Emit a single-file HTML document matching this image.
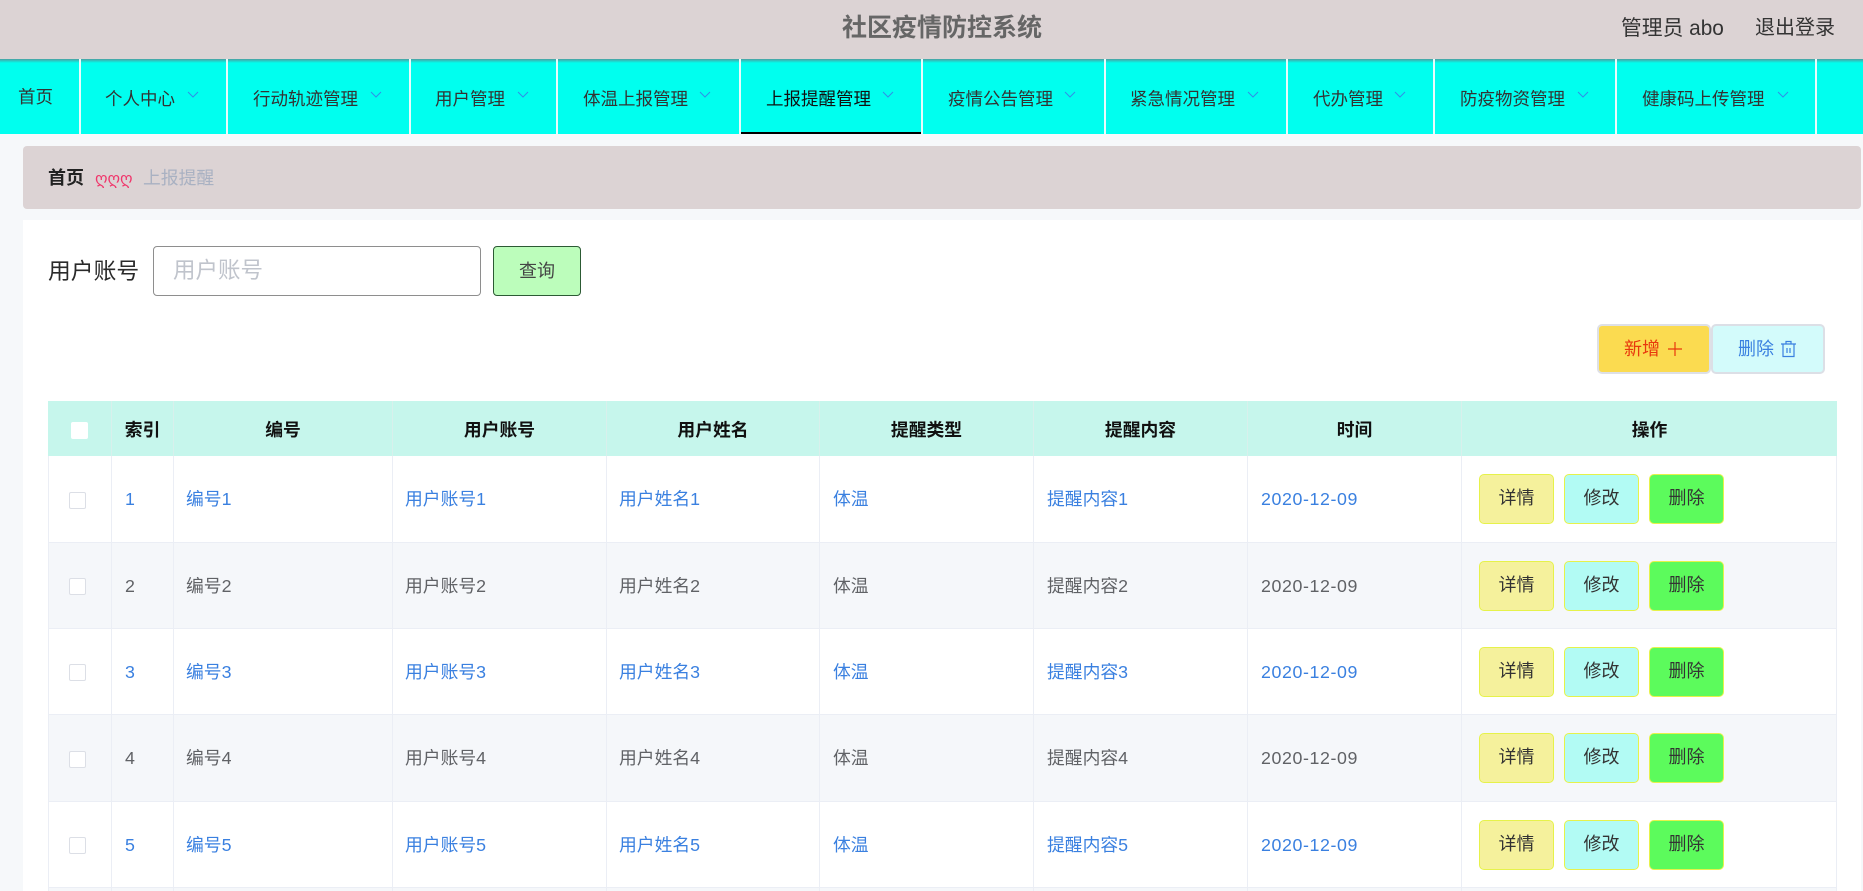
<!DOCTYPE html>
<html lang="zh"><head><meta charset="utf-8"><title>社区疫情防控系统</title>
<style>
*{box-sizing:border-box;margin:0;padding:0}
html,body{width:1863px;height:891px;overflow:hidden;background:#f6f8fa;font-family:"Liberation Sans","Noto Sans CJK SC",sans-serif;color:#333}
.a{position:absolute;white-space:nowrap}
#hd{left:0;top:0;width:1863px;height:59px;background:#dcd3d4;z-index:2}
#shadow{left:0;top:59px;width:1863px;height:4px;background:linear-gradient(#4d9ea0,#00ffef);z-index:3}
#nav{left:0;top:59px;width:1863px;height:75px;background:#00ffef}
.sep{position:absolute;top:59px;width:2px;height:75px;background:#e8fbfb;z-index:4}
.nt{position:absolute;top:86px;font-size:17.5px;line-height:26px;color:#333;white-space:nowrap}
.cv{position:absolute;top:91px}
#bc{left:23px;top:146px;width:1838px;height:63px;background:#dcd3d4;border-radius:4px}
#main{left:23px;top:220px;width:1838px;height:671px;background:#fff}
.r{position:absolute;left:48px;width:1789px;border-bottom:1px solid #ebeef5;font-size:17.8px}
.c{position:absolute;top:0;height:100%;border-right:1px solid #ebeef5;padding-left:13px;white-space:nowrap;overflow:hidden}
.c1{left:0;width:64px;border-left:1px solid #ebeef5}.c2{left:64px;width:62px}.c3{left:126px;width:219px;padding-left:12px}.c4{left:345px;width:214px;padding-left:12px}.c5{left:559px;width:213px;padding-left:12px}.c6{left:772px;width:214px}.c7{left:986px;width:214px}.c8{left:1200px;width:214px;letter-spacing:.6px}.c9{left:1414px;width:375px}
.h{background:#c6f6ec;top:401px;height:55px;border:0;line-height:59px;font-weight:bold;color:#111;letter-spacing:0}
.h .c{padding:0;text-align:center;border-color:#d8f0ec;border-left:0;letter-spacing:0}
.o{color:#3a80e0;background:#fff}
.e{color:#606266;background:#f5f7fa}
.ck{position:absolute;left:20px;width:17px;height:17px;background:#fff;border:1px solid #dcdfe6;border-radius:2px}
.b{position:absolute;width:75px;height:50px;border-radius:5px;text-align:center;line-height:46px;font-size:18px;color:#333;border:1px solid #e6f24a;letter-spacing:0}
.b1{left:17px;background:#f5f19c}.b2{left:102px;background:#b2fbf4}.b3{left:187px;background:#5cfb5c}
</style></head><body>
<div class="a" id="hd"></div><div class="a" id="shadow"></div>
<div class="a" style="left:842px;top:12px;font-size:25px;line-height:32px;font-weight:bold;color:#666;z-index:5">社区疫情防控系统</div>
<div class="a" style="left:1621px;top:15px;font-size:20.8px;line-height:27px;color:#333;z-index:5">管理员 abo</div>
<div class="a" style="left:1755px;top:15px;font-size:20px;line-height:27px;color:#333;z-index:5">退出登录</div>
<div class="a" id="nav"></div>
<div class="sep" style="left:79px"></div><div class="sep" style="left:226px"></div><div class="sep" style="left:409px"></div><div class="sep" style="left:556px"></div><div class="sep" style="left:739px"></div><div class="sep" style="left:921px"></div><div class="sep" style="left:1104px"></div><div class="sep" style="left:1286px"></div><div class="sep" style="left:1433px"></div><div class="sep" style="left:1615px"></div><div class="sep" style="left:1815px"></div>
<div class="a" style="left:741px;top:132px;width:180px;height:2px;background:#000;z-index:5"></div>
<div class="nt" style="left:18px;top:84px">首页</div>
<div class="nt" style="left:105px">个人中心</div>
<div class="nt" style="left:253px">行动轨迹管理</div>
<div class="nt" style="left:435px">用户管理</div>
<div class="nt" style="left:583px">体温上报管理</div>
<div class="nt" style="left:766px;color:#111">上报提醒管理</div>
<div class="nt" style="left:948px">疫情公告管理</div>
<div class="nt" style="left:1130px">紧急情况管理</div>
<div class="nt" style="left:1313px">代办管理</div>
<div class="nt" style="left:1460px">防疫物资管理</div>
<div class="nt" style="left:1642px">健康码上传管理</div>
<svg class="cv" style="left:187px" width="12" height="8"><path d="M1 1L6 6L11 1" fill="none" stroke="#2f8fe8" stroke-width="1"/></svg>
<svg class="cv" style="left:370px" width="12" height="8"><path d="M1 1L6 6L11 1" fill="none" stroke="#2f8fe8" stroke-width="1"/></svg>
<svg class="cv" style="left:517px" width="12" height="8"><path d="M1 1L6 6L11 1" fill="none" stroke="#2f8fe8" stroke-width="1"/></svg>
<svg class="cv" style="left:699px" width="12" height="8"><path d="M1 1L6 6L11 1" fill="none" stroke="#2f8fe8" stroke-width="1"/></svg>
<svg class="cv" style="left:882px" width="12" height="8"><path d="M1 1L6 6L11 1" fill="none" stroke="#2f8fe8" stroke-width="1"/></svg>
<svg class="cv" style="left:1064px" width="12" height="8"><path d="M1 1L6 6L11 1" fill="none" stroke="#2f8fe8" stroke-width="1"/></svg>
<svg class="cv" style="left:1247px" width="12" height="8"><path d="M1 1L6 6L11 1" fill="none" stroke="#2f8fe8" stroke-width="1"/></svg>
<svg class="cv" style="left:1394px" width="12" height="8"><path d="M1 1L6 6L11 1" fill="none" stroke="#2f8fe8" stroke-width="1"/></svg>
<svg class="cv" style="left:1577px" width="12" height="8"><path d="M1 1L6 6L11 1" fill="none" stroke="#2f8fe8" stroke-width="1"/></svg>
<svg class="cv" style="left:1777px" width="12" height="8"><path d="M1 1L6 6L11 1" fill="none" stroke="#2f8fe8" stroke-width="1"/></svg>

<div class="a" id="bc"></div>
<div class="a" style="left:48px;top:165px;font-size:18px;line-height:26px;font-weight:bold;color:#222">首页</div>
<div class="a" style="left:95px;top:167px;width:38px;font-size:16px;line-height:24px;color:#f0366b;font-family:'DejaVu Sans',sans-serif;letter-spacing:-.1px">ღღღ</div>
<div class="a" style="left:143px;top:165px;font-size:17.8px;line-height:26px;color:#a9b1c2">上报提醒</div>

<div class="a" id="main"></div>
<div class="a" style="left:48px;top:255px;font-size:22.8px;line-height:32px;color:#2a2a2a">用户账号</div>
<div class="a" style="left:153px;top:246px;width:328px;height:50px;background:#fff;border:1px solid #8e8e8e;border-radius:4px"></div>
<div class="a" style="left:173px;top:255px;font-size:22.5px;line-height:32px;color:#c0c4cc">用户账号</div>
<div class="a" style="left:493px;top:246px;width:88px;height:50px;background:#bcfdbb;border:1px solid #2c5a34;border-radius:4px;text-align:center;line-height:49px;font-size:18px;color:#444">查询</div>

<div class="a" style="left:1597px;top:324px;width:114px;height:50px;background:#fbdb50;border:2px solid #dee0e6;border-radius:5px;font-size:18px;line-height:46px;color:#e8380d;padding-left:25px">新增</div>
<svg class="a" style="left:1667px;top:341px" width="16" height="16"><path d="M8 1V15M1 8H15" stroke="#e8380d" stroke-width="1.2"/></svg>
<div class="a" style="left:1711px;top:324px;width:114px;height:50px;background:#d3fbfb;border:2px solid #dcdfe6;border-radius:5px;font-size:18px;line-height:46px;color:#3a80e0;padding-left:25px">删除</div>
<svg class="a" style="left:1780px;top:340px" width="17" height="18"><path d="M1 4H16M6 4V1.5H11V4M3 4V16.5H14V4M7 8V13M10 8V13" fill="none" stroke="#3a80e0" stroke-width="1.2"/></svg>

<div class="r h"><div class="c c1" style="border:0;border-right:1px solid #d8f0ec"></div><div class="c c2">索引</div><div class="c c3">编号</div><div class="c c4">用户账号</div><div class="c c5">用户姓名</div><div class="c c6">提醒类型</div><div class="c c7">提醒内容</div><div class="c c8">时间</div><div class="c c9" style="border:0">操作</div></div>
<div class="a" style="left:71px;top:422px;width:17px;height:17px;background:#fff;border-radius:2px;z-index:3"></div>

<div class="r o" style="top:456px;height:87px;line-height:86px"><div class="c c1"><span class="ck" style="top:36px"></span></div><div class="c c2">1</div><div class="c c3">编号1</div><div class="c c4">用户账号1</div><div class="c c5">用户姓名1</div><div class="c c6">体温</div><div class="c c7">提醒内容1</div><div class="c c8">2020-12-09</div><div class="c c9"><span class="b b1" style="top:18px">详情</span><span class="b b2" style="top:18px">修改</span><span class="b b3" style="top:18px">删除</span></div></div>

<div class="r e" style="top:543px;height:86px;line-height:86px"><div class="c c1"><span class="ck" style="top:35px"></span></div><div class="c c2">2</div><div class="c c3">编号2</div><div class="c c4">用户账号2</div><div class="c c5">用户姓名2</div><div class="c c6">体温</div><div class="c c7">提醒内容2</div><div class="c c8">2020-12-09</div><div class="c c9"><span class="b b1" style="top:18px">详情</span><span class="b b2" style="top:18px">修改</span><span class="b b3" style="top:18px">删除</span></div></div>

<div class="r o" style="top:629px;height:86px;line-height:86px"><div class="c c1"><span class="ck" style="top:35px"></span></div><div class="c c2">3</div><div class="c c3">编号3</div><div class="c c4">用户账号3</div><div class="c c5">用户姓名3</div><div class="c c6">体温</div><div class="c c7">提醒内容3</div><div class="c c8">2020-12-09</div><div class="c c9"><span class="b b1" style="top:18px">详情</span><span class="b b2" style="top:18px">修改</span><span class="b b3" style="top:18px">删除</span></div></div>

<div class="r e" style="top:715px;height:87px;line-height:86px"><div class="c c1"><span class="ck" style="top:36px"></span></div><div class="c c2">4</div><div class="c c3">编号4</div><div class="c c4">用户账号4</div><div class="c c5">用户姓名4</div><div class="c c6">体温</div><div class="c c7">提醒内容4</div><div class="c c8">2020-12-09</div><div class="c c9"><span class="b b1" style="top:18px">详情</span><span class="b b2" style="top:18px">修改</span><span class="b b3" style="top:18px">删除</span></div></div>

<div class="r o" style="top:802px;height:86px;line-height:86px"><div class="c c1"><span class="ck" style="top:35px"></span></div><div class="c c2">5</div><div class="c c3">编号5</div><div class="c c4">用户账号5</div><div class="c c5">用户姓名5</div><div class="c c6">体温</div><div class="c c7">提醒内容5</div><div class="c c8">2020-12-09</div><div class="c c9"><span class="b b1" style="top:18px">详情</span><span class="b b2" style="top:18px">修改</span><span class="b b3" style="top:18px">删除</span></div></div>

<div class="r e" style="top:888px;height:3px;border:0"><div class="c c1"></div><div class="c c2"></div><div class="c c3"></div><div class="c c4"></div><div class="c c5"></div><div class="c c6"></div><div class="c c7"></div><div class="c c8"></div><div class="c c9"></div></div>
</body></html>
